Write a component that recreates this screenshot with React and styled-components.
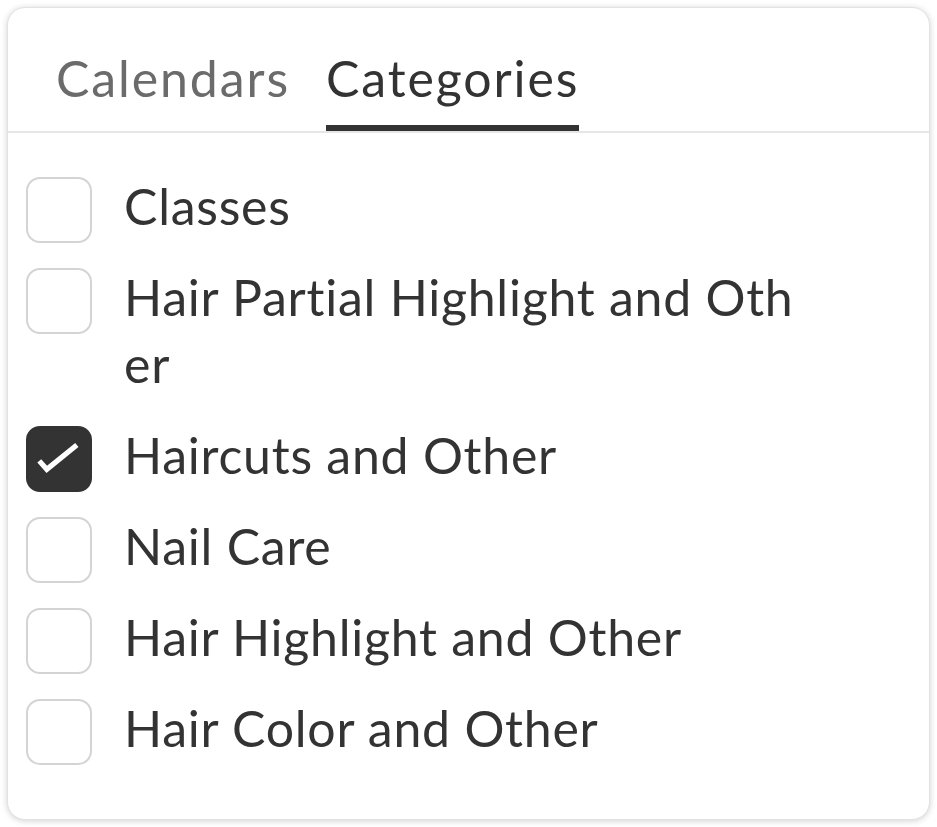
import React, { useState } from 'react';
import styled, { createGlobalStyle } from 'styled-components';

const GlobalStyle = createGlobalStyle`
  html, body {
    margin: 0;
    background: #ffffff;
  }
  body {
    font-family: Lato, "Open Sans", Arial, sans-serif;
    color: #333333;
  }
`;

const categories = [
  { id: 'classes', name: 'Classes' },
  { id: 'partial', name: 'Hair Partial Highlight and Other' },
  { id: 'haircuts', name: 'Haircuts and Other' },
  { id: 'nails', name: 'Nail Care' },
  { id: 'highlight', name: 'Hair Highlight and Other' },
  { id: 'color', name: 'Hair Color and Other' },
];

const Card = styled.div`
  box-sizing: border-box;
  margin: 7px;
  height: 813px;
  background: #ffffff;
  border: 1px solid #e2e2e2;
  border-radius: 18px;
  box-shadow: 0 1px 6px rgba(0, 0, 0, 0.18);
  overflow: hidden;
`;

const TabBar = styled.div`
  display: flex;
  gap: 36px;
  padding: 0 0 0 48px;
  border-bottom: 2px solid #e6e6e6;
`;

const Tab = styled.button`
  appearance: none;
  background: none;
  border: 0;
  border-bottom: 6px solid ${(p) => (p.$active ? '#333333' : 'transparent')};
  margin: 0;
  padding: 37px 0 13px;
  font-family: inherit;
  font-size: 50px;
  line-height: 67px;
  letter-spacing: 1.9px;
  color: ${(p) => (p.$active ? '#333333' : '#6b6b6b')};
  cursor: pointer;
`;

const List = styled.ul`
  list-style: none;
  margin: 0;
  padding: 40px 0 0 18px;
  display: flex;
  flex-direction: column;
  gap: 24px;
`;

const Row = styled.li`
  display: flex;
  align-items: flex-start;
  gap: 32px;
  cursor: pointer;
`;

const Box = styled.span`
  box-sizing: border-box;
  flex: none;
  width: 66px;
  height: 66px;
  margin: 4px 0 -3px;
  border-radius: 14px;
  border: 2px solid ${(p) => (p.$checked ? '#333333' : '#d4d4d4')};
  background: ${(p) => (p.$checked ? '#333333' : '#ffffff')};
  display: flex;
  align-items: center;
  justify-content: center;
`;

const Label = styled.span`
  max-width: 680px;
  font-size: 50px;
  line-height: 67px;
  letter-spacing: 0.75px;
  color: #333333;
  word-break: break-all;
`;

const Check = () => (
  <svg width="66" height="66" viewBox="0 0 66 66" fill="none">
    <path d="M12 35 L20 44 L52 18" stroke="#ffffff" strokeWidth="5.5" strokeLinejoin="miter" />
  </svg>
);

export default function App() {
  const [tab, setTab] = useState('categories');
  const [checked, setChecked] = useState({ haircuts: true });

  const toggle = (id) => setChecked((c) => ({ ...c, [id]: !c[id] }));

  return (
    <>
      <GlobalStyle />
      <Card>
        <TabBar>
          <Tab $active={tab === 'calendars'} onClick={() => setTab('calendars')}>
            Calendars
          </Tab>
          <Tab $active={tab === 'categories'} onClick={() => setTab('categories')}>
            Categories
          </Tab>
        </TabBar>
        <List>
          {categories.map((c) => (
            <Row key={c.id} onClick={() => toggle(c.id)}>
              <Box $checked={!!checked[c.id]}>{checked[c.id] && <Check />}</Box>
              <Label>{c.name}</Label>
            </Row>
          ))}
        </List>
      </Card>
    </>
  );
}
